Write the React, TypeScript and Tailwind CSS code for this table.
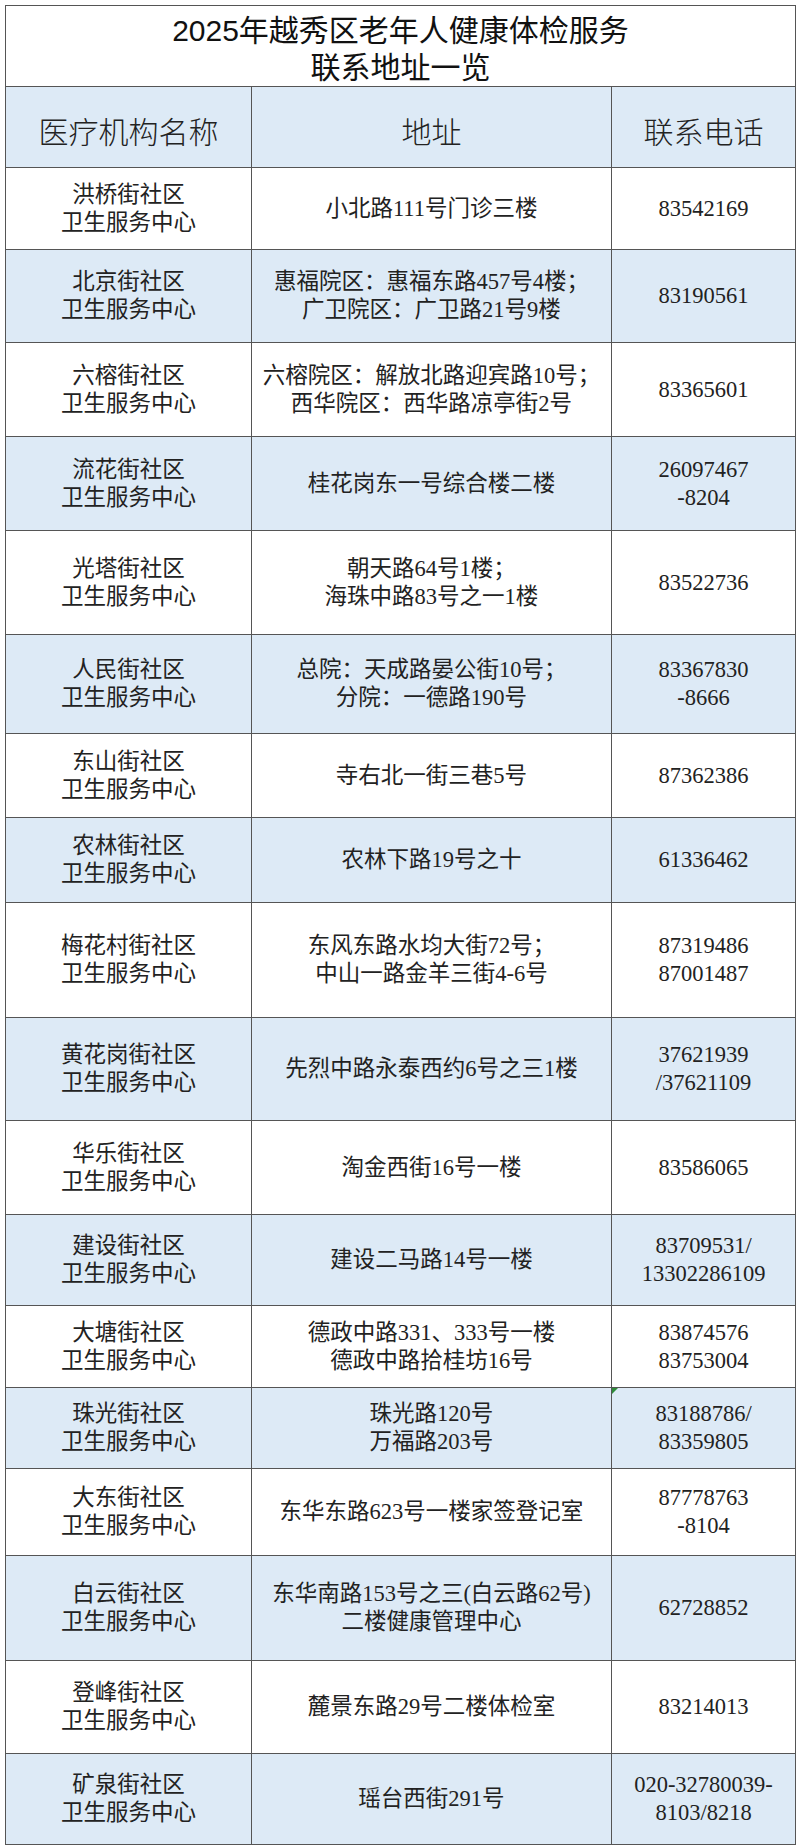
const rows: { name: string; h: number; addr: string[]; tel: string[]; mark?: boolean }[] = [
  { name: '洪桥街社区', h: 82, addr: ['小北路111号门诊三楼'], tel: ['83542169'] },
  { name: '北京街社区', h: 93, addr: ['惠福院区：惠福东路457号4楼；', '广卫院区：广卫路21号9楼'], tel: ['83190561'] },
  { name: '六榕街社区', h: 94, addr: ['六榕院区：解放北路迎宾路10号；', '西华院区：西华路凉亭街2号'], tel: ['83365601'] },
  { name: '流花街社区', h: 94, addr: ['桂花岗东一号综合楼二楼'], tel: ['26097467', '-8204'] },
  { name: '光塔街社区', h: 104, addr: ['朝天路64号1楼；', '海珠中路83号之一1楼'], tel: ['83522736'] },
  { name: '人民街社区', h: 99, addr: ['总院：天成路晏公街10号；', '分院：一德路190号'], tel: ['83367830', '-8666'] },
  { name: '东山街社区', h: 84, addr: ['寺右北一街三巷5号'], tel: ['87362386'] },
  { name: '农林街社区', h: 85, addr: ['农林下路19号之十'], tel: ['61336462'] },
  { name: '梅花村街社区', h: 115, addr: ['东风东路水均大街72号；', '中山一路金羊三街4-6号'], tel: ['87319486', '87001487'] },
  { name: '黄花岗街社区', h: 103, addr: ['先烈中路永泰西约6号之三1楼'], tel: ['37621939', '/37621109'] },
  { name: '华乐街社区', h: 94, addr: ['淘金西街16号一楼'], tel: ['83586065'] },
  { name: '建设街社区', h: 91, addr: ['建设二马路14号一楼'], tel: ['83709531/', '13302286109'] },
  { name: '大塘街社区', h: 82, addr: ['德政中路331、333号一楼', '德政中路拾桂坊16号'], tel: ['83874576', '83753004'] },
  { name: '珠光街社区', h: 81, addr: ['珠光路120号', '万福路203号'], tel: ['83188786/', '83359805'], mark: true },
  { name: '大东街社区', h: 87, addr: ['东华东路623号一楼家签登记室'], tel: ['87778763', '-8104'] },
  { name: '白云街社区', h: 105, addr: ['东华南路153号之三(白云路62号)', '二楼健康管理中心'], tel: ['62728852'] },
  { name: '登峰街社区', h: 93, addr: ['麓景东路29号二楼体检室'], tel: ['83214013'] },
  { name: '矿泉街社区', h: 91, addr: ['瑶台西街291号'], tel: ['020-32780039-', '8103/8218'] },
];

const cell = 'border-[1.5px] border-[#555] text-center align-middle p-0';
const body = "font-['Liberation_Serif','Noto_Sans_CJK_SC',serif] text-[22.5px] leading-[28px] text-[#222]";

function Lines({ items }: { items: string[] }) {
  return (
    <>
      {items.map((t, i) => (
        <div key={i} className="whitespace-nowrap">
          {t}
        </div>
      ))}
    </>
  );
}

export default function App() {
  return (
    <div className="bg-white w-[800px] min-h-[1848px] pt-[5px] pl-[5px]">
      <table className="border-collapse table-fixed w-[790px]">
        <colgroup>
          <col className="w-[246px]" />
          <col className="w-[360px]" />
          <col className="w-[184px]" />
        </colgroup>
        <tbody>
          <tr className="h-[80px]">
            <td colSpan={3} className={`${cell} bg-white pt-[6px]`}>
              <div className="font-['Liberation_Sans','Noto_Sans_CJK_SC',sans-serif] text-[30px] leading-[37px] text-[#111]">
                <div>2025年越秀区老年人健康体检服务</div>
                <div>联系地址一览</div>
              </div>
            </td>
          </tr>
          <tr className="h-[81px] bg-[#ddeaf6]">
            {['医疗机构名称', '地址', '联系电话'].map((t) => (
              <td
                key={t}
                className={`${cell} pt-[6px] font-['Noto_Sans_CJK_SC',sans-serif] text-[30px] leading-[36px] text-[#222] font-light`}
              >
                {t}
              </td>
            ))}
          </tr>
          {rows.map((r, i) => (
            <tr key={r.name} style={{ height: r.h }} className={i % 2 === 1 ? 'bg-[#ddeaf6]' : 'bg-white'}>
              <td className={`${cell} ${body}`}>
                <div>{r.name}</div>
                <div>卫生服务中心</div>
              </td>
              <td className={`${cell} ${body}`}>
                <Lines items={r.addr} />
              </td>
              <td className={`${cell} ${body} relative`}>
                {r.mark && (
                  <span className="absolute left-0 top-0 w-0 h-0 border-t-[6px] border-r-[6px] border-t-[#2e8b3a] border-r-transparent" />
                )}
                <Lines items={r.tel} />
              </td>
            </tr>
          ))}
        </tbody>
      </table>
    </div>
  );
}
